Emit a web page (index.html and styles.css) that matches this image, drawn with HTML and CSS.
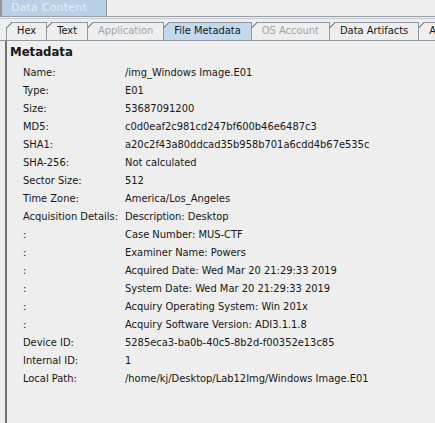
FILE: index.html
```html
<!DOCTYPE html>
<html>
<head>
<meta charset="utf-8">
<link rel="stylesheet" href="styles.css">
</head>
<body>
<div class="window">
  <div class="titlebar">
    <div class="title-tab">Data Content</div>
  </div>
  <div class="rule"></div>
  <div class="tabs">
    <div class="tab">Hex</div>
    <div class="tab">Text</div>
    <div class="tab disabled">Application</div>
    <div class="tab selected">File Metadata</div>
    <div class="tab disabled">OS Account</div>
    <div class="tab">Data Artifacts</div>
    <div class="tab">Analysis Results</div>
  </div>
  <div class="panel">
    <div class="heading">Metadata</div>
    <div class="grid">
      <div>Name:</div><div>/img_Windows Image.E01</div>
      <div>Type:</div><div>E01</div>
      <div>Size:</div><div>53687091200</div>
      <div>MD5:</div><div>c0d0eaf2c981cd247bf600b46e6487c3</div>
      <div>SHA1:</div><div>a20c2f43a80ddcad35b958b701a6cdd4b67e535c</div>
      <div>SHA-256:</div><div>Not calculated</div>
      <div>Sector Size:</div><div>512</div>
      <div>Time Zone:</div><div>America/Los_Angeles</div>
      <div>Acquisition Details:</div><div>Description: Desktop</div>
      <div>:</div><div>Case Number: MUS-CTF</div>
      <div>:</div><div>Examiner Name: Powers</div>
      <div>:</div><div>Acquired Date: Wed Mar 20 21:29:33 2019</div>
      <div>:</div><div>System Date: Wed Mar 20 21:29:33 2019</div>
      <div>:</div><div>Acquiry Operating System: Win 201x</div>
      <div>:</div><div>Acquiry Software Version: ADI3.1.1.8</div>
      <div>Device ID:</div><div>5285eca3-ba0b-40c5-8b2d-f00352e13c85</div>
      <div>Internal ID:</div><div>1</div>
      <div>Local Path:</div><div>/home/kj/Desktop/Lab12Img/Windows Image.E01</div>
    </div>
  </div>
</div>
</body>
</html>
```
FILE: styles.css
```css
* { box-sizing: border-box; }
html, body { margin: 0; padding: 0; }
body {
  background: #eeeeee;
  font-family: "DejaVu Sans Condensed", "DejaVu Sans", sans-serif;
  font-size: 11px;
  color: #161616;
}
.window {
  width: 435px;
  height: 423px;
  overflow: hidden;
  display: flex;
  flex-direction: column;
}
.titlebar {
  display: flex;
  height: 17px;
  border-bottom: 1px solid #9aa0a7;
}
.title-tab {
  width: 107px;
  height: 16px;
  background: #b8cfe6;
  border-left: 2px solid #8f969d;
  border-right: 1px solid #8f969d;
  color: #e6edf5;
  font-family: "DejaVu Sans", sans-serif;
  font-size: 11px;
  line-height: 16px;
  padding-left: 9px;
  letter-spacing: 0.2px;
}
.rule {
  height: 1px;
  margin-top: 1px;
  background: #c6cacf;
}
.tabs {
  display: flex;
  margin-top: 3px;
  padding-left: 6px;
  height: 19px;
  border-bottom: 1px solid #8f969d;
  overflow: hidden;
}
.tab {
  flex: none;
  height: 18px;
  line-height: 18px;
  padding: 0 10px 0 11px;
  border-right: 1px solid #8f969d;
  white-space: nowrap;
  color: #161616;
  --bg: #eeeeee;
  background:
    linear-gradient(#8f969d, #8f969d) 6px 0 / 100% 1px no-repeat,
    linear-gradient(#8f969d, #8f969d) 0 6px / 1px 100% no-repeat,
    linear-gradient(135deg, transparent 4.2px, #8f969d 4.2px, #8f969d 5.2px, var(--bg) 5.2px);
}
.tab + .tab { margin-left: -1px; }
.tab.disabled { color: #9ea4aa; }
.tab.selected { --bg: #c4d8ee; }
.panel {
  flex: 1;
  margin-left: 5px;
  border-left: 2px solid #6f757b;
  padding: 2px 0 0 3px;
}
.heading {
  font-weight: bold;
  font-size: 13px;
  line-height: 18px;
  margin-bottom: 2px;
}
.grid {
  display: grid;
  grid-template-columns: 102px 1fr;
  grid-auto-rows: 18px;
  align-items: center;
  padding-left: 13px;
  white-space: nowrap;
}
```
